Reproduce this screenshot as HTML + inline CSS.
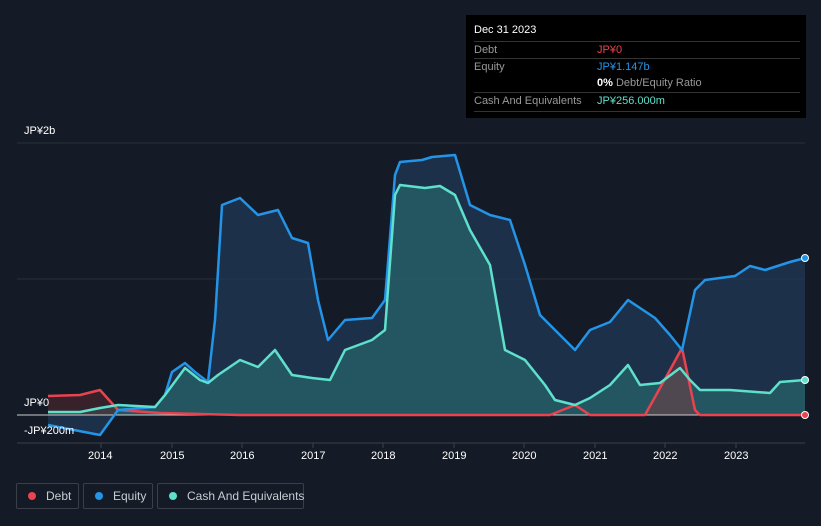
<!DOCTYPE html><html><head><style>
html,body{margin:0;width:821px;height:526px;background:#151b26;font-family:"Liberation Sans",sans-serif;overflow:hidden;position:relative}
.t{position:absolute;color:#fff;font-size:11px;white-space:nowrap}
.tip{position:absolute;left:466px;top:15px;width:340px;height:103px;background:#000;font-size:11px}
.row{position:absolute;left:8px;right:6px;border-top:1px solid #333;height:17px}
.lg{position:absolute;top:483px;height:26px;border:1px solid #3a3f4a;border-radius:2px;color:#c8ccd2;font-size:12px;line-height:24px;box-sizing:border-box;white-space:nowrap}
.lg i{display:inline-block;width:8px;height:8px;border-radius:50%;margin:0 10px 0 11px;vertical-align:0}
</style></head><body>
<svg width="821" height="526" style="position:absolute;left:0;top:0">
<line x1="17" y1="143" x2="805" y2="143" stroke="#2a303b"/>
<line x1="17" y1="279" x2="805" y2="279" stroke="#2a303b"/>
<line x1="17" y1="443" x2="805" y2="443" stroke="#3a404b"/>
<g stroke="#3a404b"><line x1="101" y1="443" x2="101" y2="448"/><line x1="172" y1="443" x2="172" y2="448"/><line x1="242" y1="443" x2="242" y2="448"/><line x1="313" y1="443" x2="313" y2="448"/><line x1="383" y1="443" x2="383" y2="448"/><line x1="454" y1="443" x2="454" y2="448"/><line x1="524" y1="443" x2="524" y2="448"/><line x1="595" y1="443" x2="595" y2="448"/><line x1="665" y1="443" x2="665" y2="448"/><line x1="736" y1="443" x2="736" y2="448"/></g>
<polygon fill="#1f3a55" fill-opacity="0.75" points="48,415 48,425 100,435 118,410 155,407 165,395 172,372 185,363 195,372 208,382 215,320 222,205 240,198 258,215 278,210 292,238 308,243 318,300 328,340 345,320 372,318 385,300 395,175 400,162 422,160 432,157 455,155 470,205 490,215 510,220 525,265 540,315 560,335 575,350 590,330 610,322 628,300 640,308 655,318 670,335 682,350 695,290 705,280 735,276 750,266 765,270 790,262 805,258 805,415"/>
<polygon fill="#2a6f72" fill-opacity="0.6" points="48,415 48,412 80,412 100,408 118,405 155,407 165,395 185,368 200,380 208,383 218,375 240,360 258,367 275,350 292,375 312,378 330,380 345,350 372,340 385,330 395,195 400,185 425,188 440,186 455,195 470,230 490,265 505,350 525,360 545,385 555,400 575,405 590,398 610,385 628,365 640,385 660,383 680,368 690,380 700,390 730,390 770,393 780,382 805,380 805,415"/>
<polygon fill="#5a2a30" fill-opacity="0.5" points="48,415 48,396 80,395 100,390 118,410 118,415"/>
<polygon fill="#7a3a40" fill-opacity="0.5" points="645,415 670,370 682,348 695,410 700,415"/>
<line x1="17" y1="415" x2="805" y2="415" stroke="#ccc" stroke-width="1"/>
<g fill="none" stroke-width="2.5" stroke-linejoin="round">
<polyline stroke="#e8434f" points="48,396 80,395 100,390 118,410 160,413 240,415 550,415 575,405 590,415 645,415 670,370 682,348 695,410 700,415 805,415"/>
<polyline stroke="#2394e8" points="48,425 100,435 118,410 155,407 165,395 172,372 185,363 195,372 208,382 215,320 222,205 240,198 258,215 278,210 292,238 308,243 318,300 328,340 345,320 372,318 385,300 395,175 400,162 422,160 432,157 455,155 470,205 490,215 510,220 525,265 540,315 560,335 575,350 590,330 610,322 628,300 640,308 655,318 670,335 682,350 695,290 705,280 735,276 750,266 765,270 790,262 805,258"/>
<polyline stroke="#5ee0cc" points="48,412 80,412 100,408 118,405 155,407 165,395 185,368 200,380 208,383 218,375 240,360 258,367 275,350 292,375 312,378 330,380 345,350 372,340 385,330 395,195 400,185 425,188 440,186 455,195 470,230 490,265 505,350 525,360 545,385 555,400 575,405 590,398 610,385 628,365 640,385 660,383 680,368 690,380 700,390 730,390 770,393 780,382 805,380"/>
</g>
<circle cx="805" cy="258" r="3.5" fill="#2394e8" stroke="#fff"/>
<circle cx="805" cy="380" r="3.5" fill="#5ee0cc" stroke="#fff"/>
<circle cx="805" cy="415" r="3.5" fill="#e8434f" stroke="#fff"/>
</svg>
<div class="t" style="left:24px;top:125px">JP¥2b</div>
<div class="t" style="left:24px;top:397px">JP¥0</div>
<div class="t" style="left:24px;top:425px">-JP¥200m</div>
<div class="t" style="left:88px;top:450px">2014</div><div class="t" style="left:160px;top:450px">2015</div><div class="t" style="left:230px;top:450px">2016</div><div class="t" style="left:301px;top:450px">2017</div><div class="t" style="left:371px;top:450px">2018</div><div class="t" style="left:442px;top:450px">2019</div><div class="t" style="left:512px;top:450px">2020</div><div class="t" style="left:583px;top:450px">2021</div><div class="t" style="left:653px;top:450px">2022</div><div class="t" style="left:724px;top:450px">2023</div>
<div class="tip">
<div style="position:absolute;left:8px;top:9px;color:#fff">Dec 31 2023</div>
<div class="row" style="top:26px"><span style="position:absolute;left:0;top:2px;color:#999">Debt</span><span style="position:absolute;left:123px;top:2px;color:#e8434f">JP¥0</span></div>
<div class="row" style="top:43px"><span style="position:absolute;left:0;top:2px;color:#999">Equity</span><span style="position:absolute;left:123px;top:2px;color:#2394e8">JP¥1.147b</span></div>
<div style="position:absolute;left:131px;top:62px;color:#999"><b style="color:#fff">0%</b> Debt/Equity Ratio</div>
<div class="row" style="top:77px;height:18px;border-bottom:1px solid #333"><span style="position:absolute;left:0;top:2px;color:#999">Cash And Equivalents</span><span style="position:absolute;left:123px;top:2px;color:#5ee0cc">JP¥256.000m</span></div>
</div>
<div class="lg" style="left:16px;width:63px"><i style="background:#e8434f"></i>Debt</div>
<div class="lg" style="left:83px;width:70px"><i style="background:#2394e8"></i>Equity</div>
<div class="lg" style="left:157px;width:147px"><i style="background:#5ee0cc"></i>Cash And Equivalents</div>
</body></html>
